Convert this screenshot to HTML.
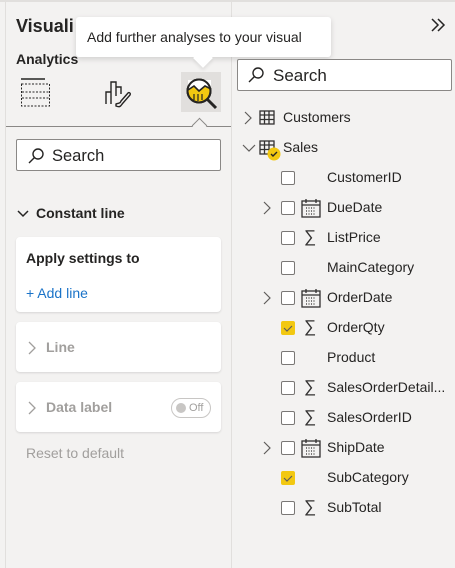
<!DOCTYPE html>
<html><head><style>
*{box-sizing:border-box;margin:0;padding:0}
body{width:455px;height:568px;background:#f3f2f1;font-family:"Segoe UI","Liberation Sans",sans-serif;position:relative;overflow:hidden;color:#252423}
.a{position:absolute}
.t{position:absolute;font-size:14px;white-space:nowrap;margin-top:1px}
.card{position:absolute;left:16px;width:205px;background:#fff;border-radius:4px;box-shadow:0 1px 2px rgba(0,0,0,.12)}
.cb{position:absolute;left:281px;width:14px;height:14px;border:1px solid #797775;border-radius:2px;background:#fff}
.cb.on{background:#f2c811;border-color:#f2c811}
.sig{position:absolute;left:304px;font-size:17px;color:#323130;font-weight:300}
</style></head><body>
<div class="a" style="left:0;top:0;width:455px;height:2px;background:#e1dfdd"></div>
<div class="a" style="left:5px;top:2px;width:1px;height:566px;background:#e1dfdd"></div>
<div class="a" style="left:231px;top:2px;width:1px;height:566px;background:#e1dfdd"></div>

<div class="t" style="left:16px;top:15px;font-size:18px;font-weight:bold">Visuali</div>
<div class="t" style="left:16px;top:50px;font-size:14px;font-weight:600">Analytics</div>
<svg class="a" style="left:20px;top:78px" width="32" height="32" viewBox="0 0 32 32" fill="none" stroke="#252423"><line x1="1" y1="1" x2="25" y2="1" stroke-width="1.5"/><rect x="1.5" y="6" width="28" height="22" stroke-dasharray="2 1.5"/><line x1="2" y1="14" x2="29" y2="14" stroke-dasharray="2 1.5"/><line x1="2" y1="20" x2="29" y2="20" stroke-dasharray="2 1.5"/></svg>
<svg class="a" style="left:104px;top:78px" width="30" height="32" viewBox="0 0 30 32" fill="none" stroke="#252423" stroke-width="1.4"><path d="M2 26V14h5v12M7 14V4h5v14M12 9h5v7"/><path d="M12 26c2-1 4 0 5-3l7-8c1-1 3 0 2 2l-7 8c-2 2-2 5-7 3z"/></svg>
<div class="a" style="left:181px;top:72px;width:40px;height:40px;background:#e1dfdd"></div>
<svg class="a" style="left:185px;top:77px" width="34" height="34" viewBox="0 0 34 34"><circle cx="14" cy="14" r="11.5" fill="#f2c811" stroke="#252423" stroke-width="2"/><path d="M3 12 L9 9 L14 14 L20 9 L26 12 L26 3 L3 3z" fill="#fff"/><circle cx="14" cy="14" r="11.5" fill="none" stroke="#252423" stroke-width="2"/><path d="M3 13l6-4 5 5 6-5 6 3" fill="none" stroke="#252423" stroke-width="1.6"/><path d="M9 17v6M13 17v7M17 17v6" stroke="#252423" stroke-width="1.2"/><line x1="22" y1="22" x2="31" y2="31" stroke="#252423" stroke-width="3"/></svg>
<div class="a" style="left:6px;top:126px;width:225px;height:1px;background:#8a8886"></div>
<div class="a" style="left:194px;top:120px;width:11px;height:11px;background:#f3f2f1;border-left:1px solid #8a8886;border-top:1px solid #8a8886;transform:rotate(45deg)"></div>

<div class="a" style="left:76px;top:17px;width:255px;height:40px;background:#fff;border-radius:3px;box-shadow:0 2px 6px rgba(0,0,0,.15)"></div>
<div class="a" style="left:196px;top:51px;width:14px;height:14px;background:#fff;transform:rotate(45deg);box-shadow:2px 2px 3px rgba(0,0,0,.08)"></div>
<div class="a" style="left:190px;top:44px;width:26px;height:12px;background:#fff"></div>
<div class="t" style="left:87px;top:28px;font-size:14px">Add further analyses to your visual</div>

<div class="a" style="left:16px;top:139px;width:205px;height:32px;background:#fff;border:1px solid #8a8886;border-radius:2px"></div>
<svg class="a" style="left:27px;top:147px" width="18" height="18" viewBox="0 0 18 18" fill="none" stroke="#252423" stroke-width="1.4"><circle cx="11" cy="7" r="5"/><line x1="7.5" y1="10.5" x2="2" y2="16"/></svg>
<div class="t" style="left:52px;top:146px;font-size:16.5px">Search</div>

<svg class="a" style="left:17px;top:209px" width="12" height="10"><path d="M1 2l5 5 5-5" fill="none" stroke="#252423" stroke-width="1.5"/></svg>
<div class="t" style="left:36px;top:204px;font-weight:600">Constant line</div>

<div class="card" style="top:237px;height:75px"></div>
<div class="t" style="left:26px;top:249px;font-weight:600">Apply settings to</div>
<div class="t" style="left:26px;top:284px;color:#1a73c8">+ Add line</div>

<div class="card" style="top:322px;height:50px"></div>
<svg class="a" style="left:28px;top:341px" width="8" height="14"><path d="M1 1l6 6-6 6" fill="none" stroke="#a19f9d" stroke-width="1.3"/></svg>
<div class="t" style="left:46px;top:338px;color:#a19f9d;font-weight:600">Line</div>

<div class="card" style="top:382px;height:50px"></div>
<svg class="a" style="left:28px;top:401px" width="8" height="14"><path d="M1 1l6 6-6 6" fill="none" stroke="#a19f9d" stroke-width="1.3"/></svg>
<div class="t" style="left:46px;top:398px;color:#a19f9d;font-weight:600">Data label</div>
<div class="a" style="left:171px;top:398px;width:40px;height:20px;border:1px solid #c8c6c4;border-radius:10px"></div>
<div class="a" style="left:176px;top:403px;width:10px;height:10px;border-radius:50%;background:#c8c6c4"></div>
<div class="t" style="left:189px;top:401px;font-size:11px;color:#a19f9d">Off</div>
<div class="t" style="left:26px;top:444px;color:#a19f9d">Reset to default</div>

<svg class="a" style="left:430px;top:17px" width="16" height="16" fill="none" stroke="#252423" stroke-width="1.5"><path d="M2 2l6 6-6 6M8 2l6 6-6 6"/></svg>
<div class="a" style="left:237px;top:59px;width:215px;height:32px;background:#fff;border:1px solid #8a8886;border-radius:2px"></div>
<svg class="a" style="left:247px;top:66px" width="18" height="18" viewBox="0 0 18 18" fill="none" stroke="#252423" stroke-width="1.4"><circle cx="11" cy="7" r="5"/><line x1="7.5" y1="10.5" x2="2" y2="16"/></svg>
<div class="t" style="left:273px;top:65px;font-size:17px">Search</div>

<svg class="a" style="left:244px;top:111px" width="8" height="14"><path d="M1 1l6 6-6 6" fill="none" stroke="#605e5c" stroke-width="1.2"/></svg>
<svg class="a" style="left:259px;top:110px" width="17" height="16" fill="none" stroke="#323130" stroke-width="1.3"><rect x="1" y="1" width="14" height="13"/><path d="M1 5h14M1 9.5h14M5.5 1v13M10 1v13"/></svg>
<div class="t" style="left:283px;top:108px">Customers</div>
<svg class="a" style="left:242px;top:144px" width="14" height="9"><path d="M1 1l6 6 6-6" fill="none" stroke="#605e5c" stroke-width="1.2"/></svg>
<svg class="a" style="left:259px;top:140px" width="17" height="16" fill="none" stroke="#323130" stroke-width="1.3"><rect x="1" y="1" width="14" height="13"/><path d="M1 5h14M1 9.5h14M5.5 1v13M10 1v13"/></svg>
<svg class="a" style="left:267px;top:147px" width="14" height="14"><circle cx="7" cy="7" r="6.5" fill="#f2c811"/><path d="M4 7l2 2 4-4" fill="none" stroke="#252423" stroke-width="1.4"/></svg>
<div class="t" style="left:283px;top:138px">Sales</div>

<div class="cb" style="top:171px"></div><div class="t" style="left:327px;top:168px">CustomerID</div>
<svg class="a" style="left:263px;top:201px" width="8" height="14"><path d="M1 1l6 6-6 6" fill="none" stroke="#605e5c" stroke-width="1.2"/></svg>
<div class="cb" style="top:201px"></div>
<svg class="a" style="left:301px;top:198px" width="20" height="20" fill="none" stroke="#323130" stroke-width="1.3"><rect x="1" y="3" width="18" height="16"/><path d="M1 7h18M5 1v4M15 1v4"/><path d="M5 10h10M5 13h10M5 16h10" stroke-dasharray="1 1.5"/></svg>
<div class="t" style="left:327px;top:198px">DueDate</div>
<div class="cb" style="top:231px"></div><div class="sig" style="top:227px">∑</div><div class="t" style="left:327px;top:228px">ListPrice</div>
<div class="cb" style="top:261px"></div><div class="t" style="left:327px;top:258px">MainCategory</div>
<svg class="a" style="left:263px;top:291px" width="8" height="14"><path d="M1 1l6 6-6 6" fill="none" stroke="#605e5c" stroke-width="1.2"/></svg>
<div class="cb" style="top:291px"></div>
<svg class="a" style="left:301px;top:288px" width="20" height="20" fill="none" stroke="#323130" stroke-width="1.3"><rect x="1" y="3" width="18" height="16"/><path d="M1 7h18M5 1v4M15 1v4"/><path d="M5 10h10M5 13h10M5 16h10" stroke-dasharray="1 1.5"/></svg>
<div class="t" style="left:327px;top:288px">OrderDate</div>
<div class="cb on" style="top:321px"><svg width="12" height="12" class="a" style="left:0;top:0"><path d="M2 6l3 3 5-5" fill="none" stroke="#605e5c" stroke-width="1.2"/></svg></div><div class="sig" style="top:317px">∑</div><div class="t" style="left:327px;top:318px">OrderQty</div>
<div class="cb" style="top:351px"></div><div class="t" style="left:327px;top:348px">Product</div>
<div class="cb" style="top:381px"></div><div class="sig" style="top:377px">∑</div><div class="t" style="left:327px;top:378px">SalesOrderDetail...</div>
<div class="cb" style="top:411px"></div><div class="sig" style="top:407px">∑</div><div class="t" style="left:327px;top:408px">SalesOrderID</div>
<svg class="a" style="left:263px;top:441px" width="8" height="14"><path d="M1 1l6 6-6 6" fill="none" stroke="#605e5c" stroke-width="1.2"/></svg>
<div class="cb" style="top:441px"></div>
<svg class="a" style="left:301px;top:438px" width="20" height="20" fill="none" stroke="#323130" stroke-width="1.3"><rect x="1" y="3" width="18" height="16"/><path d="M1 7h18M5 1v4M15 1v4"/><path d="M5 10h10M5 13h10M5 16h10" stroke-dasharray="1 1.5"/></svg>
<div class="t" style="left:327px;top:438px">ShipDate</div>
<div class="cb on" style="top:471px"><svg width="12" height="12" class="a" style="left:0;top:0"><path d="M2 6l3 3 5-5" fill="none" stroke="#605e5c" stroke-width="1.2"/></svg></div><div class="t" style="left:327px;top:468px">SubCategory</div>
<div class="cb" style="top:501px"></div><div class="sig" style="top:497px">∑</div><div class="t" style="left:327px;top:498px">SubTotal</div>
</body></html>
